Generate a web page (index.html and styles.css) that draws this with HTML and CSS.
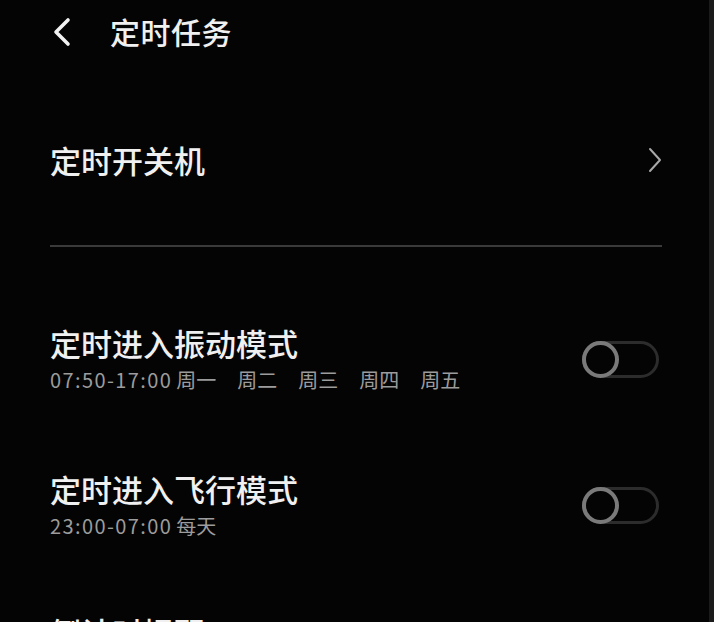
FILE: index.html
```html
<!DOCTYPE html>
<html lang="zh-CN">
<head>
    <meta charset="UTF-8">
    <meta name="viewport" content="width=device-width, initial-scale=1.0">
    <title>定时任务</title>
    <link rel="stylesheet" href="styles.css">
</head>
<body>
    <div class="screen">
        <div class="header">
            <svg class="back" width="22" height="30" viewBox="0 0 22 30">
                <path d="M17 3 L5 15 L17 27" fill="none" stroke="#f2f2f2" stroke-width="3.6" stroke-linecap="round" stroke-linejoin="round"/>
            </svg>
            <h1 class="title">定时任务</h1>
        </div>

        <div class="link-row">
            <span class="row-title">定时开关机</span>
            <svg class="chevron" width="16" height="26" viewBox="0 0 16 26">
                <path d="M3 2 L13 13 L3 24" fill="none" stroke="#a8a8a8" stroke-width="2" stroke-linecap="round" stroke-linejoin="round"/>
            </svg>
        </div>

        <div class="divider"></div>

        <div class="list">
            <div class="row">
                <div class="row-text">
                    <div class="row-title">定时进入振动模式</div>
                    <div class="row-sub">
                        <span class="time">07:50-17:00</span><span class="day">周一</span><span class="day">周二</span><span class="day">周三</span><span class="day">周四</span><span class="day">周五</span>
                    </div>
                </div>
                <div class="toggle"><div class="knob"></div></div>
            </div>

            <div class="row">
                <div class="row-text">
                    <div class="row-title">定时进入飞行模式</div>
                    <div class="row-sub">
                        <span class="time">23:00-07:00</span><span class="day">每天</span>
                    </div>
                </div>
                <div class="toggle"><div class="knob"></div></div>
            </div>

            <div class="row row-peek">
                <div class="row-text">
                    <div class="row-title">倒计时提醒</div>
                </div>
            </div>
        </div>
    </div>
</body>
</html>
```

FILE: styles.css
```css
/* --- Page --- */
body {
    margin: 0;
    background-color: #000;
    font-family: "Noto Sans CJK SC", "Noto Sans", sans-serif;
    color: #f0f0f0;
    overflow: hidden;
}

.screen {
    height: 622px;
    background-color: #040404;
    border-right: 5px solid #1b1b1b; /* edge of the phone frame */
    padding: 0 47px 0 50px;
    box-sizing: border-box;
    overflow: hidden;
}

/* --- Header --- */
.header {
    height: 62px;
    display: flex;
    align-items: center;
}

.back {
    margin-left: 1px;
    margin-top: 2px;
}

.title {
    margin: 0 0 0 37px;
    font-size: 30px;
    font-weight: 500;
    line-height: 40px;
    letter-spacing: 0.5px;
}

/* --- Rows --- */
.link-row {
    margin-top: 38px;
    height: 120px;
    display: flex;
    align-items: center;
    justify-content: space-between;
}

.row-title {
    font-size: 31px;
    font-weight: 500;
    line-height: 40px;
}

.chevron {
    margin-right: -1px;
}

.divider {
    margin-top: 25px;
    height: 2px;
    background-color: #3a3a3a;
}

.list {
    margin-top: 39px;
}

.row {
    height: 146px;
    display: flex;
    align-items: center;
    justify-content: space-between;
}

/* only the top of this row shows at the bottom edge */
.row-peek {
    align-items: flex-start;
    padding-top: 34px;
    box-sizing: border-box;
}

.row-text {
    display: flex;
    flex-direction: column;
}

.row-sub {
    font-size: 20px;
    line-height: 30px;
    color: #9c9c9c;
    margin-top: 2px;
}

.time {
    letter-spacing: 1.4px;
    margin-right: 4px;
}

.day + .day {
    margin-left: 21px;
}

/* --- Switch (off) --- */
.toggle {
    width: 77px;
    height: 37px;
    margin-right: 3px;
    border: 3px solid #2c2c2c;
    border-radius: 20px;
    box-sizing: border-box;
    position: relative;
}

.knob {
    position: absolute; /* knob sits over the track */
    left: -3px;
    top: -3px;
    width: 37px;
    height: 37px;
    border: 4px solid #7a7a7a;
    border-radius: 50%;
    box-sizing: border-box;
    background-color: #040404;
}
```
